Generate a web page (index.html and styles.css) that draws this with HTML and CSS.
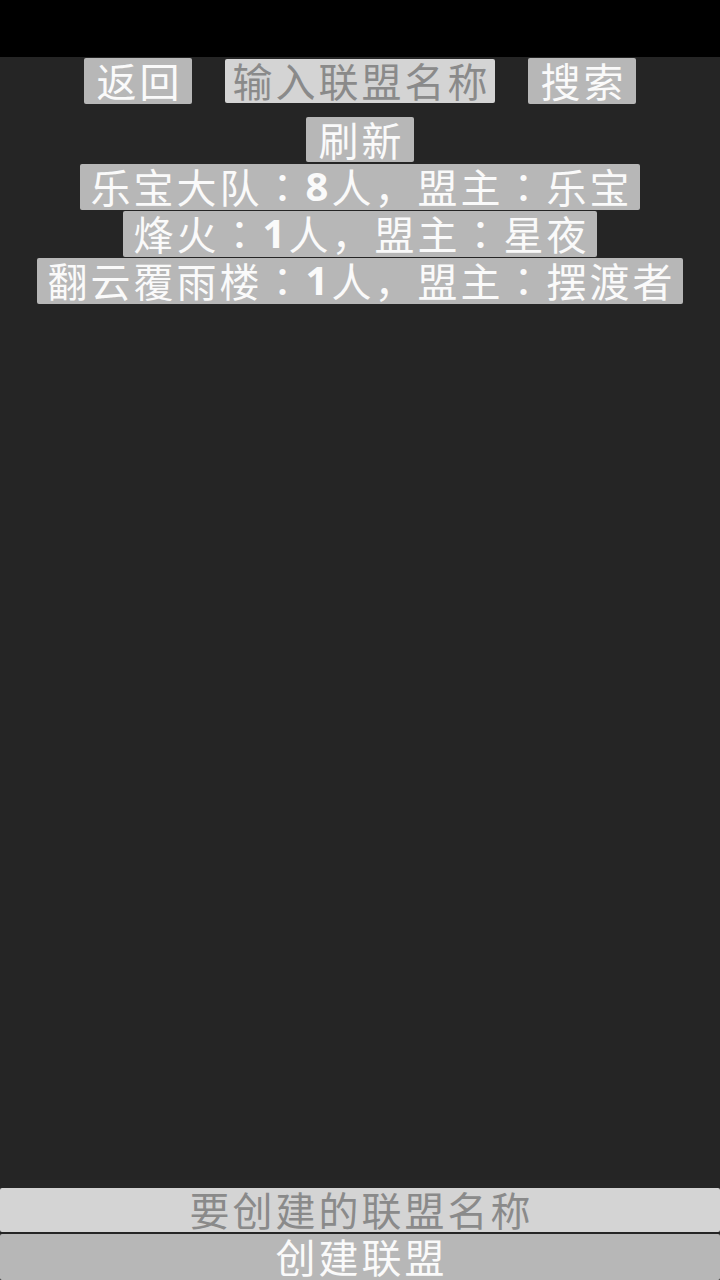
FILE: index.html
```html
<!DOCTYPE html>
<html lang="zh-CN">
<head>
<meta charset="utf-8">
<link rel="stylesheet" href="styles.css">
</head>
<body>
<div class="statusbar"></div>
<main class="screen">
  <div class="toprow">
    <div class="btn small">返回</div>
    <div class="field search">输入联盟名称</div>
    <div class="btn small">搜索</div>
  </div>
  <div class="btn small refresh">刷新</div>
  <div class="list">
    <div class="btn">乐宝大队<span class="p" lang="ja">：</span><b class="num">8</b>人<span class="p" lang="ja">，</span>盟主<span class="p" lang="ja">：</span>乐宝</div>
    <div class="btn">烽火<span class="p" lang="ja">：</span><b class="num">1</b>人<span class="p" lang="ja">，</span>盟主<span class="p" lang="ja">：</span>星夜</div>
    <div class="btn">翻云覆雨楼<span class="p" lang="ja">：</span><b class="num">1</b>人<span class="p" lang="ja">，</span>盟主<span class="p" lang="ja">：</span>摆渡者</div>
  </div>
  <div class="spacer"></div>
  <div class="bottom">
    <div class="field wide">要创建的联盟名称</div>
    <div class="btn wide">创建联盟</div>
  </div>
</main>
</body>
</html>
```
FILE: styles.css
```css
html, body {
  margin: 0;
  padding: 0;
  width: 720px;
  height: 1280px;
  overflow: hidden;
  background: #252525;
  font-family: "Noto Sans CJK SC", "Noto Sans", sans-serif;
}
.statusbar {
  height: 57px;
  background: #000;
}
.screen {
  height: 1223px;
  display: flex;
  flex-direction: column;
  align-items: center;
}
.btn, .field {
  box-sizing: border-box;
  height: 46px;
  padding: 0 8px 2px 11px;
  display: flex;
  align-items: center;
  justify-content: center;
  font-size: 40px;
  font-weight: 400;
  letter-spacing: 3px;
  line-height: 1;
  border-radius: 2px;
  white-space: nowrap;
}
.p {
  font-family: "Noto Sans CJK JP", "Noto Sans CJK SC", sans-serif;
}
.btn {
  background: #b7b7b7;
  color: #fafafa;
}
.field {
  background: #d4d4d4;
  color: #8a8a8a;
}
.toprow {
  margin-top: 1px;
  display: flex;
  align-items: center;
  gap: 33px;
}
.small {
  width: 108px;
}
.search {
  width: 270px;
  height: 44px;
}
.refresh {
  margin-top: 13px;
  height: 45px;
}
.list {
  margin-top: 2px;
  display: flex;
  flex-direction: column;
  align-items: center;
  gap: 1px;
}
.num {
  font-family: "Open Sans", sans-serif;
  font-weight: 700;
}
.spacer {
  flex: 1;
}
.bottom {
  width: 100%;
  display: flex;
  flex-direction: column;
  gap: 2px;
}
.wide {
  width: 100%;
}
.bottom .field {
  height: 44px;
}
```
